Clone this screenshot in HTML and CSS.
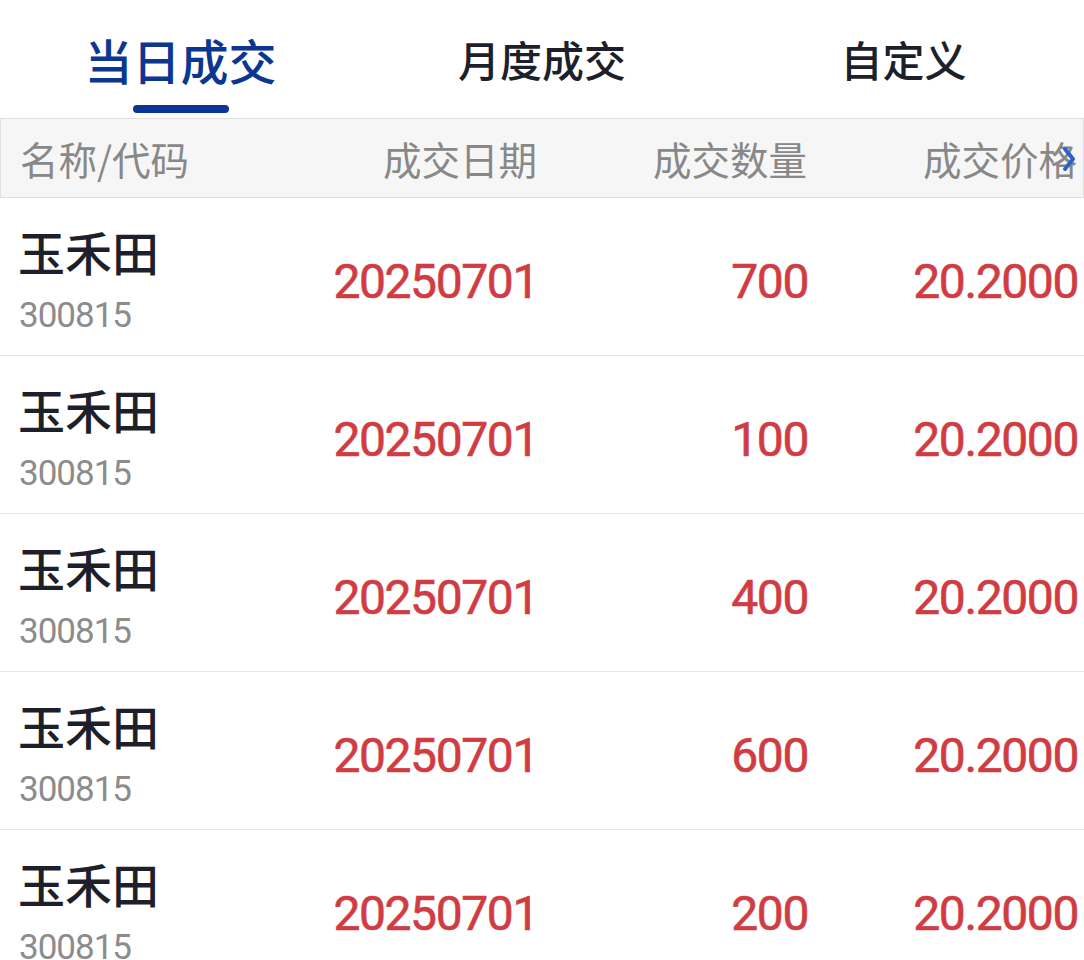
FILE: index.html
```html
<!DOCTYPE html>
<html lang="zh">
<head>
<meta charset="utf-8">
<title>当日成交</title>
<link rel="stylesheet" href="styles.css">
</head>
<body>
<div class="page">
  <nav class="tabs">
    <div class="tab active"><span class="tab-label">当日成交</span><span class="tab-bar"></span></div>
    <div class="tab"><span class="tab-label">月度成交</span></div>
    <div class="tab"><span class="tab-label">自定义</span></div>
  </nav>
  <div class="thead">
    <div class="th th-name">名称/代码</div>
    <div class="th">成交日期</div>
    <div class="th">成交数量</div>
    <div class="th">成交价格</div>
    <svg class="more" viewBox="0 0 14 30" width="14" height="30"><path d="M3 5 L11 15 L3 25" fill="none" stroke="#2a62c9" stroke-width="4" stroke-linecap="round" stroke-linejoin="round"/></svg>
  </div>
  <div class="rows">
    <div class="row">
      <div class="name"><div class="stock">玉禾田</div><div class="code">300815</div></div>
      <div class="num">20250701</div><div class="num">700</div><div class="num">20.2000</div>
    </div>
    <div class="row">
      <div class="name"><div class="stock">玉禾田</div><div class="code">300815</div></div>
      <div class="num">20250701</div><div class="num">100</div><div class="num">20.2000</div>
    </div>
    <div class="row">
      <div class="name"><div class="stock">玉禾田</div><div class="code">300815</div></div>
      <div class="num">20250701</div><div class="num">400</div><div class="num">20.2000</div>
    </div>
    <div class="row">
      <div class="name"><div class="stock">玉禾田</div><div class="code">300815</div></div>
      <div class="num">20250701</div><div class="num">600</div><div class="num">20.2000</div>
    </div>
    <div class="row">
      <div class="name"><div class="stock">玉禾田</div><div class="code">300815</div></div>
      <div class="num">20250701</div><div class="num">200</div><div class="num">20.2000</div>
    </div>
  </div>
</div>
</body>
</html>
```

FILE: styles.css
```css
html, body {
  margin: 0;
  padding: 0;
  background: #ffffff;
  height: 960px;
  overflow: hidden;
}
body {
  font-family: "Noto Sans CJK SC", "Noto Sans", sans-serif;
}
.page {
  width: 1084px;
}
.tabs {
  display: grid;
  grid-template-columns: 361px 362px 361px;
  height: 118px;
}
.tab {
  position: relative;
  display: flex;
  flex-direction: column;
  align-items: center;
  padding-top: 27px;
}
.tab-label {
  font-size: 42px;
  line-height: 64px;
  color: #1d1f2b;
  font-weight: 500;
}
.tab.active .tab-label {
  color: #0b3691;
  font-size: 48px;
  font-weight: 500;
}
.tab-bar {
  position: absolute;
  top: 105px;
  left: 133px;
  width: 96px;
  height: 8px;
  border-radius: 4px;
  background: #0a3797;
}
.thead {
  position: relative;
  display: grid;
  grid-template-columns: 258px 259px 270px 270px;
  align-items: center;
  height: 78px;
  padding: 0 5px 0 19px;
  border: 1px solid #e0e0e0;
  background: #f6f6f6;
}
.th {
  font-size: 38.5px;
  color: #888888;
  text-align: right;
  white-space: nowrap;
  line-height: 78px;
}
.th-name {
  text-align: left;
}
.more {
  position: absolute;
  right: 7px;
  top: 25px;
}
.row {
  display: grid;
  grid-template-columns: 260px 258px 270px 270px;
  align-items: center;
  height: 157px;
  padding: 0 6px 0 20px;
  border-bottom: 1px solid #e6e6e6;
}
.name {
  padding-top: 3px;
}
.stock {
  font-size: 47px;
  line-height: 60px;
  color: #1d1f2b;
  font-weight: 500;
  margin-bottom: 15px;
  margin-left: -2px;
}
.code {
  font-family: Roboto, "Noto Sans", sans-serif;
  font-size: 35px;
  line-height: 40px;
  letter-spacing: -1px;
  color: #8c8c8c;
  margin-left: -1px;
}
.num {
  font-family: Roboto, "Noto Sans", sans-serif;
  font-size: 48px;
  letter-spacing: -1.4px;
  color: #d03c42;
  text-align: right;
  padding-top: 10px;
  -webkit-text-stroke: 0.6px #d03c42;
}
```
